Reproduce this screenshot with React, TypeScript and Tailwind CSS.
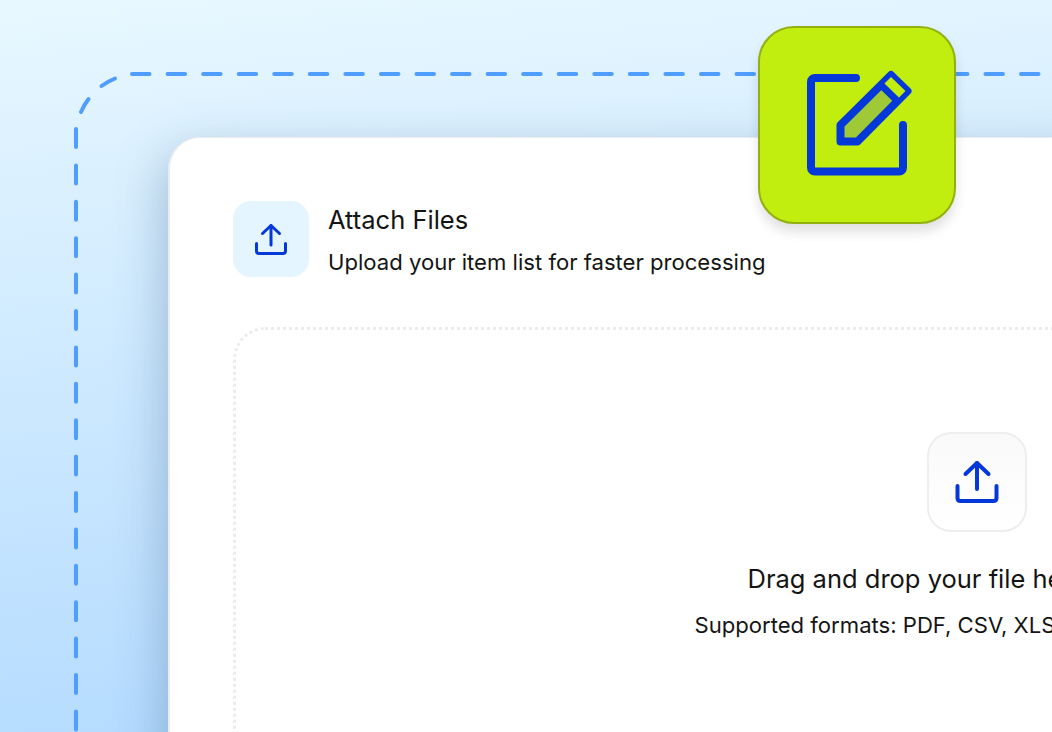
import React from 'react';

const font = { fontFamily: 'Inter, "Noto Sans", sans-serif' };

const UploadSmall = () => (
  <svg width="36" height="36" viewBox="0 0 36 36" fill="none" stroke="#0438d9" strokeWidth="3" strokeLinecap="round" strokeLinejoin="round">
    <path d="M18 4.500V24" />
    <path d="M9.500 12.500L18 4.500L26.500 12.500" />
    <path d="M3.500 22.500V30C3.500 31.500 4.500 32.500 6 32.500H30C31.500 32.500 32.500 31.500 32.500 30V22.500" />
  </svg>
);

const UploadLarge = () => (
  <svg width="48" height="48" viewBox="0 0 48 48" fill="none" stroke="#0438d9" strokeWidth="4" strokeLinecap="round" strokeLinejoin="round">
    <path d="M24 5V31" />
    <path d="M12.500 16L24 5L35.500 16" />
    <path d="M4.500 28V40C4.500 42 5.500 43 7.500 43H40.500C42.500 43 43.500 42 43.500 40V28" />
  </svg>
);

const EditIcon = () => (
  <svg width="198" height="198" viewBox="758 26 198 198" fill="none" strokeLinecap="round" strokeLinejoin="round">
    <path d="M856 78H815C812.500 78 811 79.500 811 82V167.500C811 170 812.500 171.500 815 171.500H899C901.500 171.500 903 170 903 167.500V125" stroke="#0438d9" strokeWidth="8" />
    <path d="M840.500 141.500V125L891 75L907.500 91L857.500 141.500Z" fill="#9fc936" stroke="#0438d9" strokeWidth="8" />
    <path d="M883 85L891 77L905.500 91L897.500 99Z" fill="#c1ee0e" />
    <path d="M881.500 85.500L897 100.500" stroke="#0438d9" strokeWidth="7" strokeLinecap="butt" />
  </svg>
);

export default function App() {
  return (
    <div
      style={font}
      className="relative h-[732px] w-[1052px] overflow-hidden bg-[linear-gradient(175deg,#e8f8ff_0%,#dcf1ff_20%,#b0d9ff_100%)] pl-[168px] pt-[137px] text-[#141414]"
    >
      {/* dashed outline behind the card */}
      <svg className="absolute left-0 top-0" width="1052" height="732" fill="none" stroke="#4f9dff" strokeWidth="4" strokeLinecap="round">
        <path d="M132 74H1100" strokeDasharray="17.500 18.060" />
        <path d="M115 78.500A62 62 0 0 0 101.500 86" />
        <path d="M88.500 99A62 62 0 0 0 81 112" />
        <path d="M76 129V760" strokeDasharray="18 18.400" />
      </svg>

      <div className="relative h-[800px] w-[1600px] rounded-tl-[32px] border-l-2 border-t border-[#ececec] bg-white pl-[63px] pt-[63px] shadow-[-4px_16px_48px_rgba(60,100,140,0.36)]">
        <div className="flex items-start gap-[19px]">
          <div className="flex h-[76px] w-[76px] items-center justify-center rounded-[18px] bg-[#e4f5ff]">
            <UploadSmall />
          </div>
          <div className="flex flex-col pt-px">
            <h2 className="text-[25.500px] leading-[36px] font-normal">Attach Files</h2>
            <p className="mt-[8px] text-[22.100px] leading-[32px]">Upload your item list for faster processing</p>
          </div>
        </div>

        <div className="mt-[49px] flex h-[600px] w-[1488px] flex-col items-center rounded-[32px] border-[3px] border-dotted border-[#ececec] pt-[102px]">
          <div className="flex h-[100px] w-[100px] items-center justify-center rounded-[24px] border-2 border-[#eeeeee] bg-[linear-gradient(180deg,#f9f9f9,#ffffff)]">
            <UploadLarge />
          </div>
          <p className="mt-[29px] text-[25.500px] leading-[36px]">Drag and drop your file here to upload</p>
          <p className="mt-[12px] text-[22.100px] leading-[32px]">Supported formats: PDF, CSV, XLSX, ODS (max 10MB)</p>
        </div>
      </div>

      {/* floating badge */}
      <div className="absolute left-[758px] top-[26px] h-[198px] w-[198px] rounded-[36px] border-2 border-[#93b00e] bg-[#c1ee0e] shadow-[0_8px_12px_rgba(0,0,0,0.12)]">
        <div className="absolute -left-[2px] -top-[2px]">
          <EditIcon />
        </div>
      </div>
    </div>
  );
}
